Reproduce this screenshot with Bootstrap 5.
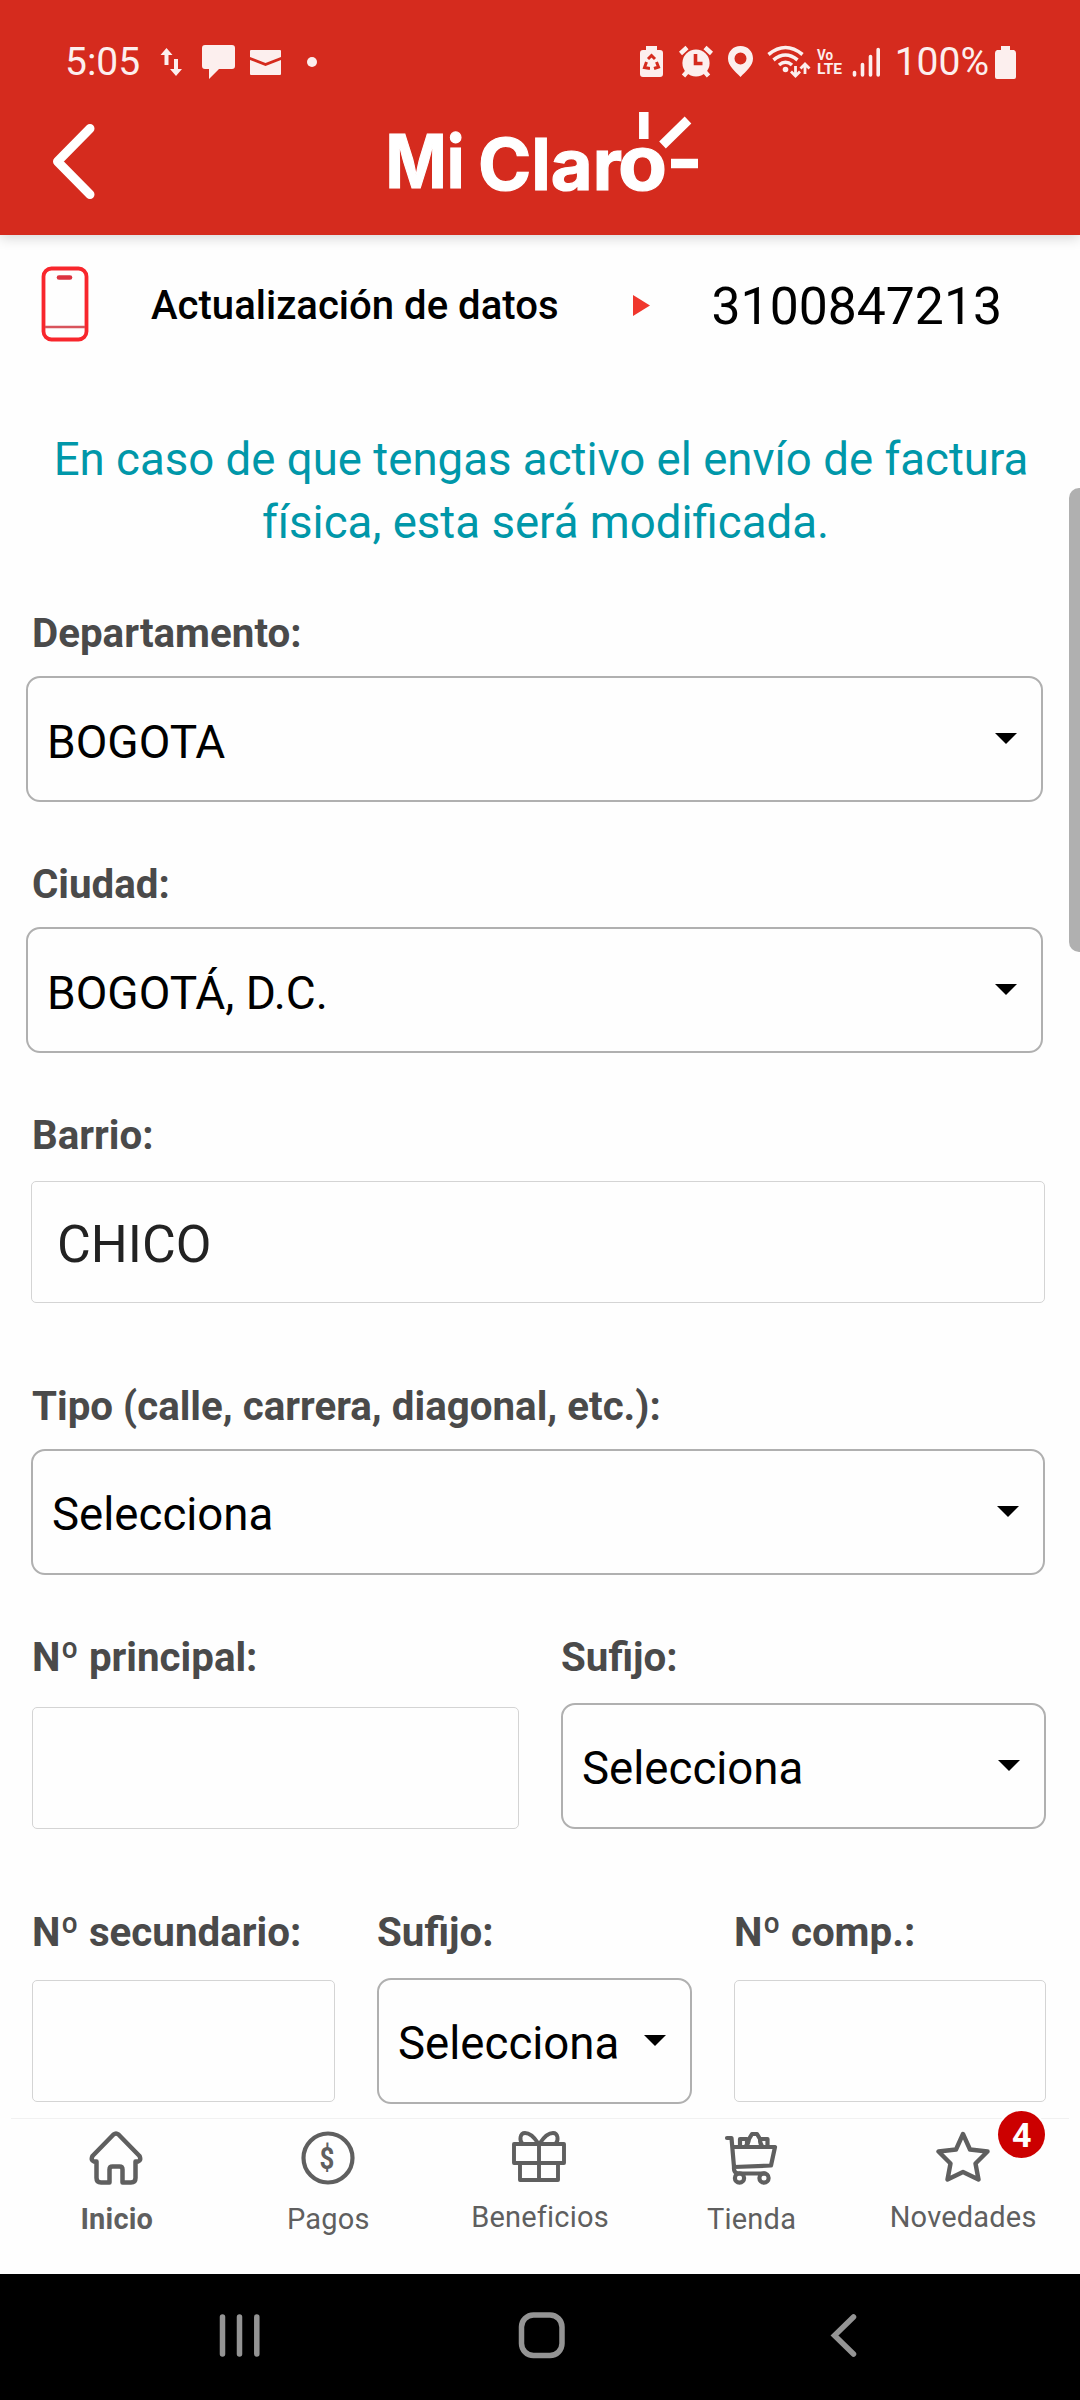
<!DOCTYPE html>
<html lang="es">
<head>
<meta charset="utf-8">
<meta name="viewport" content="width=device-width, initial-scale=1">
<title>Mi Claro</title>
<link href="https://cdn.jsdelivr.net/npm/bootstrap@5.3.0/dist/css/bootstrap.min.css" rel="stylesheet">
<style>
body{font-family:Roboto,"Liberation Sans",sans-serif;background:#fefefe;color:#000;width:1080px;height:2400px;overflow:hidden}
svg{display:block;flex:none}
.app-head{background:#d52b1e;height:235px;box-shadow:0 3px 12px rgba(0,0,0,.16);z-index:2}
.statusbar{height:122px;padding:2px 64px 0 65px;color:#fcefee;font-size:39px;line-height:1}
.statusbar svg{fill:#fcefee}
.logo-bar{height:113px}
.line-row{height:140px;padding:0 60px 0 41px}
.line-title{font-size:40.1px;font-weight:500;margin-left:62px;padding-top:3px}
.line-number{font-size:51.7px;margin-left:62px;padding-top:3px}
.notice{color:#0097a9;font-size:45.6px;line-height:63px;margin:53px 0 57px;padding-left:2px}
.notice .second{padding-left:9px}
.fields{padding:0 35px 0 31px}
.fields label{display:block;font-size:40.3px;line-height:46px;font-weight:700;color:#4a4a4a;margin:0 0 19px 1px;white-space:nowrap}
.fields .form-select{height:126px;border:2px solid #b0b0b0;border-radius:14px;font-size:45.6px;line-height:54px;color:#000;padding:5px 30px 0 19px;background-color:#fefefe;background-size:22px 12px;background-position:right 24px top 55px;background-image:url("data:image/svg+xml,%3csvg xmlns='http://www.w3.org/2000/svg' viewBox='0 0 22 12'%3e%3cpath d='M0 0h22L11 11z'/%3e%3c/svg%3e")}
.fields .form-control{height:122px;border:1.5px solid #d4d4d4;border-radius:5px;font-size:51.9px;color:#222;padding:5px 25px 0;background-color:#fefefe}
.wide{margin:0 2px 0 -5px}
.wide .form-select{font-size:46px}
.wide label{margin-left:6px}
.mb-std{margin-bottom:60px}
.scroll-thumb{right:0;top:488px;width:11px;height:464px;background:#b0b0b0;border-radius:10px 0 0 10px}
.tabbar{height:156px;margin:0 11px;border-top:1px solid #f1f1f1;color:#5f5f5f;font-size:29px;line-height:34px}
.tabbar .tab-item{flex:1;padding-top:12px;letter-spacing:.2px}
.tabbar svg{stroke:#5f5f5f;fill:none;margin:0 1px 17px 0}
.tab-item.up svg{margin-bottom:15px}
.notif{background:#c00;color:#fff;width:47px;height:47px;font-size:34px;line-height:48px;left:141px;top:-8px;box-shadow:0 0 0 2px #fefefe}
.sysnav{height:126px;background:#000}
</style>
</head>
<body class="d-flex flex-column position-relative">
<header class="app-head position-relative">
  <div class="statusbar d-flex align-items-center">
    <span>5:05</span>
    <svg style="margin-left:20px" width="23" height="30" viewBox="0 0 23 30"><path d="M6.500 1L12.500 8H8.500V18H4.500V8H.5zM16 29L10 22H14V12H18V22H22z"/></svg>
    <svg style="margin-left:19px" width="33" height="34" viewBox="0 0 33 34"><path d="M3 0H30Q33 0 33 3V21Q33 24 30 24H17L7 34V24H3Q0 24 0 21V3Q0 0 3 0z"/></svg>
    <svg style="margin-left:15px" width="31" height="25" viewBox="0 0 31 25"><path d="M1 0H30Q31 0 31 1V7L15.500 13L0 7V1Q0 0 1 0zM0 10L15.500 16L31 10V24Q31 25 30 25H1Q0 25 0 24z"/></svg>
    <svg style="margin-left:26px" width="10" height="10" viewBox="0 0 10 10"><circle cx="5" cy="5" r="5"/></svg>
    <svg class="ms-auto" style="margin-right:13px" width="242" height="34" viewBox="640 44 242 34">
      <path d="M646 45H657V49H660Q663 49 663 52V73Q663 76 660 76H643Q640 76 640 73V52Q640 49 643 49H646z"/>
      <g fill="none" stroke="#d52b1e" stroke-width="3"><path d="M648 58L651.500 54.500L655 58M656.500 61L658.500 66L654 67.500M646.500 61L644.500 66.500L650 67.500"/></g>
      <path d="M648 65L651.500 59.500L655 65L653 64.500V67H650V64.500z"/>
      <circle cx="696" cy="62" r="13.600"/><g stroke="#fcefee" stroke-width="4.500"><path d="M680.500 52.500L687 46.500M711.500 52.500L705 46.500M687 71L683.500 75M705 71L708.500 75"/></g><path d="M695.500 53V62.500H702.500" fill="none" stroke="#d52b1e" stroke-width="3.600"/>
      <path fill-rule="evenodd" d="M740.500 45C733 45 728 50.500 728 57.500C728 65 735 70 740.500 76C746 70 753 65 753 57.500C753 50.500 748 45 740.500 45zM740.500 51.500A6 6 0 1 1 740.500 63.500A6 6 0 1 1 740.500 51.500z"/>
      <g fill="none" stroke="#fcefee" stroke-width="3.600"><path d="M768.500 53.500Q785.500 39.500 802.500 53.500M773.500 59Q785.500 49 797.500 59M779 64Q785.500 58.500 792 64"/><path stroke-width="2.800" d="M795.500 65V74M791 70.500L795.500 75L800 70.500M805 73V64M800.500 67.500L805 63L809.500 67.500"/></g><circle cx="785.500" cy="68.500" r="2.800"/>
      <g font-family="Roboto" font-weight="700"><text x="817" y="59" font-size="15.500" textLength="16" lengthAdjust="spacingAndGlyphs">Vo</text><text x="817" y="73" font-size="15.500" textLength="25" lengthAdjust="spacingAndGlyphs">LTE</text></g>
      <g stroke="#fcefee" stroke-width="3.600" stroke-linecap="round"><path d="M854.500 71.500V74M862.500 63.500V74M870.500 55.500V74M878.200 48.500V74"/></g>
    </svg>
    <span>100%</span>
    <svg style="margin-left:6px" width="21" height="33" viewBox="0 0 21 33"><path d="M6 0H15V4H19Q21 5 21 7V31Q21 33 19 33H2Q0 33 0 31V7Q0 5 2 4H6z"/></svg>
  </div>
  <div class="logo-bar d-flex">
    <svg width="1080" height="113" viewBox="0 122 1080 113" style="margin-top:-15px;height:128px" preserveAspectRatio="xMinYMax meet" overflow="visible">
      <path d="M90 128.500L57.500 161.500L90 194.500" fill="none" stroke="#fff" stroke-width="9" stroke-linecap="round" stroke-linejoin="round"/>
      <g fill="#fff" stroke="#fff" stroke-width="1.200" font-family="Inter" font-weight="700">
        <text x="385.500" y="188" font-size="74" textLength="79" lengthAdjust="spacingAndGlyphs">Mi</text>
        <text x="478" y="190" font-size="71" textLength="144" lengthAdjust="spacingAndGlyphs">Clar</text>
        <text x="618" y="189.800" font-size="76" textLength="49" lengthAdjust="spacingAndGlyphs">o</text>
      </g>
      <path d="M643.800 112V139M662.500 145L688 120M671 163.500H698" fill="none" stroke="#fff" stroke-width="9.500"/>
    </svg>
  </div>
</header>

<main class="flex-grow-1 overflow-hidden">
  <div class="line-row d-flex align-items-center">
    <svg style="margin-top:-3px" width="48" height="76" viewBox="0 0 48 76" fill="none" stroke="#f8262c" stroke-width="3.800"><rect x="2.500" y="2.500" width="43" height="71" rx="8"/><path d="M18 11.500H29" stroke="#dc3340" stroke-width="4.600" stroke-linecap="round"/><path d="M4 61H44" stroke="#d8545c" stroke-width="2.600"/></svg>
    <span class="line-title">Actualización de datos</span>
    <svg style="margin-left:74px" width="17" height="21" viewBox="0 0 17 21"><path d="M0 0L17 10.500L0 21z" fill="#f0372d"/></svg>
    <span class="line-number">3100847213</span>
  </div>
  <p class="notice text-center">En caso de que tengas activo el envío de factura<br><span class="second">física, esta será modificada.</span></p>
  <form class="fields">
    <div class="wide mb-std"><label for="dep">Departamento:</label><select id="dep" class="form-select"><option>BOGOTA</option></select></div>
    <div class="wide mb-std"><label for="ciu">Ciudad:</label><select id="ciu" class="form-select"><option>BOGOTÁ, D.C.</option></select></div>
    <div style="margin-bottom:81px"><label for="bar" style="margin-bottom:22px">Barrio:</label><input id="bar" class="form-control" value="CHICO"></div>
    <div class="mb-std"><label for="tip">Tipo (calle, carrera, diagonal, etc.):</label><select id="tip" class="form-select"><option>Selecciona</option></select></div>
    <div class="d-flex justify-content-between align-items-end" style="margin:0 -1px 81px 1px">
      <div style="width:487px"><label for="pri" style="margin:0 0 26px 0">Nº principal:</label><input id="pri" class="form-control"></div>
      <div style="width:485px"><label for="suf" style="margin:0 0 22px 0">Sufijo:</label><select id="suf" class="form-select"><option>Selecciona</option></select></div>
    </div>
    <div class="d-flex justify-content-between" style="margin:0 -1px 0 1px">
      <div style="width:303px"><label for="sec" style="margin:0 0 24px 0">Nº secundario:</label><input id="sec" class="form-control"></div>
      <div style="width:315px"><label for="suf2" style="margin:0 0 22px 0">Sufijo:</label><select id="suf2" class="form-select"><option>Selecciona</option></select></div>
      <div style="width:312px"><label for="com" style="margin:0 0 24px 0">Nº comp.:</label><input id="com" class="form-control"></div>
    </div>
  </form>
</main>
<div class="scroll-thumb position-absolute"></div>

<nav class="tabbar d-flex text-center">
  <div class="tab-item d-flex flex-column align-items-center fw-bold"><svg width="54" height="54" viewBox="0 0 54 54" stroke-width="4.500" stroke-linejoin="round" stroke-linecap="round"><path d="M24.500 3.500Q27 1.500 29.500 3.500L50.500 25Q52.500 29.500 49 30.500H46.500V47Q46.500 51.500 42 51.500H33.500V38.500Q33.500 35.500 30.500 35.500H23.500Q20.500 35.500 20.500 38.500V51.500H12Q7.500 51.500 7.500 47V30.500H5Q1.500 29.500 3.500 25z"/></svg>Inicio</div>
  <div class="tab-item d-flex flex-column align-items-center"><svg width="54" height="54" viewBox="0 0 54 54" stroke-width="4.200"><circle cx="27" cy="27" r="24.500"/><text x="26" y="38" font-size="32" font-weight="700" font-family="Roboto" fill="#5f5f5f" stroke="none" text-anchor="middle" textLength="15" lengthAdjust="spacingAndGlyphs">$</text></svg>Pagos</div>
  <div class="tab-item up d-flex flex-column align-items-center"><svg width="54" height="54" viewBox="0 0 54 54" stroke-width="3.900" stroke-linejoin="round"><path d="M2 13H52V32H2zM8 32H46V49H8zM27 13V49M26 12C22 6 17 2 13 2C8 2 7 9 10.500 13M28 12C32 6 37 2 41 2C46 2 47 9 43.500 13"/></svg>Beneficios</div>
  <div class="tab-item d-flex flex-column align-items-center"><svg width="54" height="54" viewBox="0 0 54 54" stroke-width="4.200" stroke-linejoin="round" stroke-linecap="round"><path d="M3 7H7.500L10 36L47 34.500L51 16H9M10 36Q9.500 42 14 42.500H41M16 15V8H23V15M22 15Q24 14 25 8L28 3H33L36 8Q36 13 38 15M37 8H43.500V15"/><circle cx="15.500" cy="47" r="4.600"/><circle cx="40" cy="47" r="4.600"/></svg>Tienda</div>
  <div class="tab-item up d-flex flex-column align-items-center position-relative"><svg width="54" height="54" viewBox="0 0 54 54" stroke-width="4.400" stroke-linejoin="round"><path d="M27 3L34 18.500L51.500 20.500L39.500 32.500L42.500 48.500L27 41L11.500 48.500L14.500 32.500L2.500 20.500L20 18.500z"/></svg>Novedades<span class="notif position-absolute rounded-circle fw-bold">4</span></div>
</nav>
<footer class="sysnav">
  <svg width="1080" height="126" viewBox="0 2274 1080 126" fill="none" stroke="#949494" stroke-width="5.500" stroke-linecap="round"><path d="M222.500 2317V2354M239.500 2317V2354M256.800 2317V2354"/><rect x="521.500" y="2315" width="40.500" height="40.500" rx="12"/><path d="M853.500 2317L834.500 2335.500L853.500 2354"/></svg>
</footer>
<script src="https://cdn.jsdelivr.net/npm/bootstrap@5.3.0/dist/js/bootstrap.bundle.min.js"></script>
</body>
</html>
